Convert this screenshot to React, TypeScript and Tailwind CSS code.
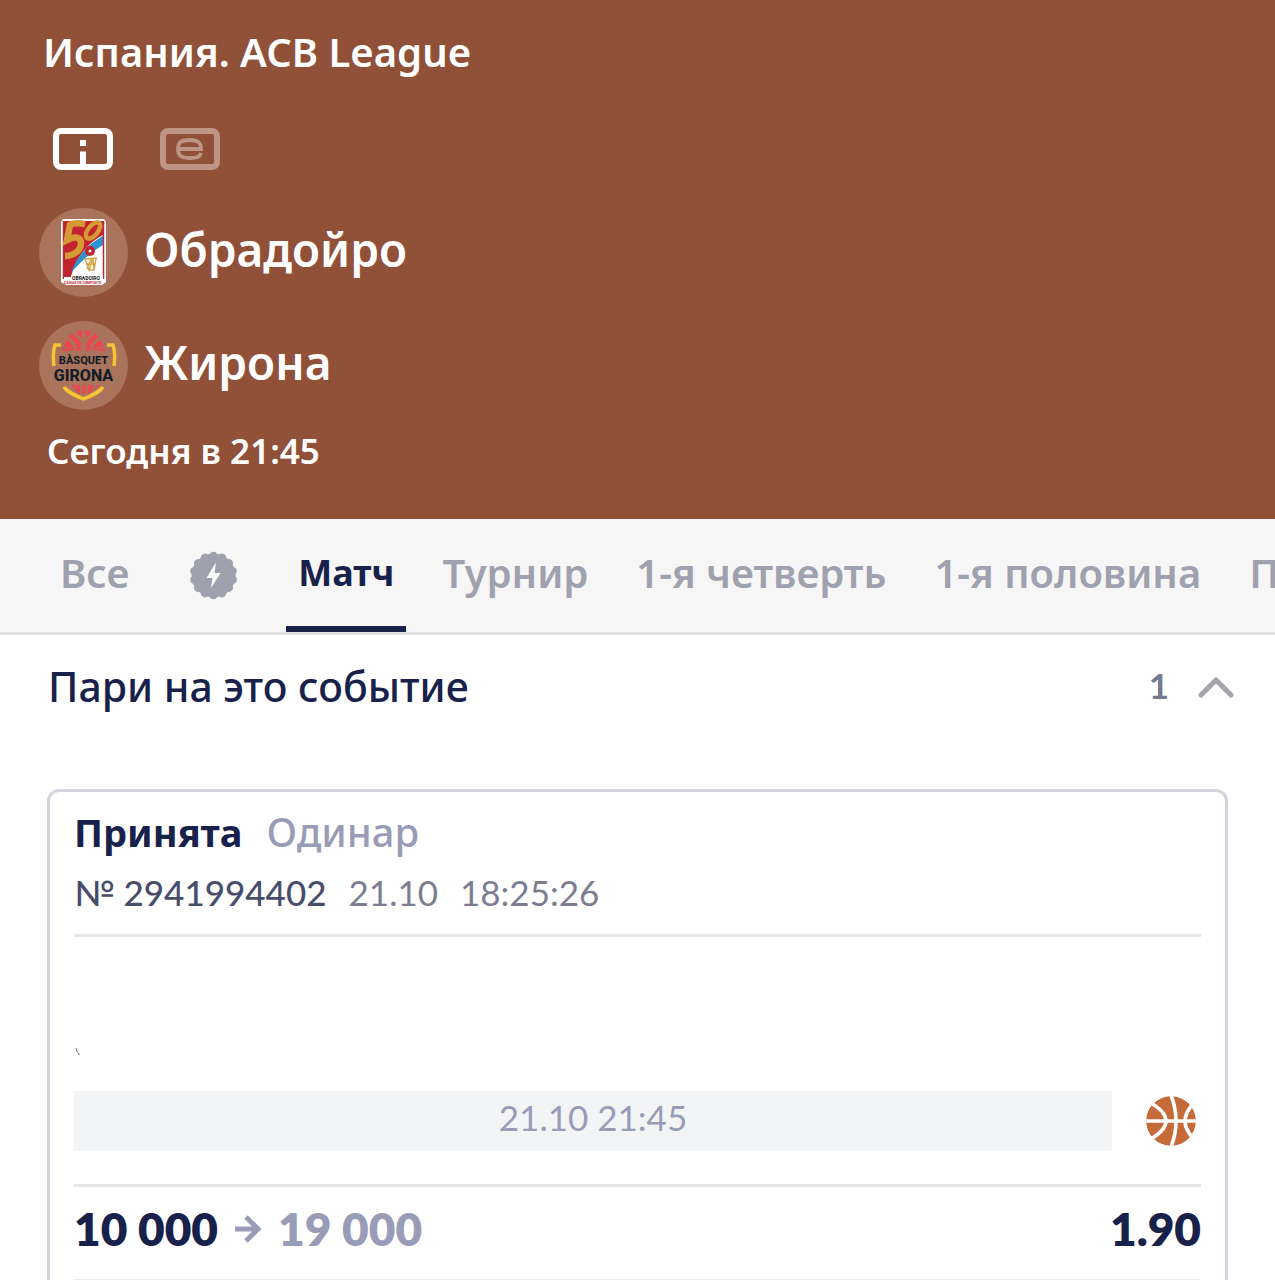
import type { ReactNode } from "react";

function InfoIcon() {
  return (
    <svg width="60" height="42" viewBox="0 0 60 42" aria-hidden="true">
      <rect x="3" y="3" width="54" height="36" rx="5" fill="none" stroke="#fff" strokeWidth="6" />
      <path d="M27 12h6v6h-6zM27 23.500h6V38h-6z" fill="#fff" />
    </svg>
  );
}

function EventIcon() {
  return (
    <svg width="60" height="42" viewBox="0 0 60 42" fill="none" stroke="#be9584" aria-hidden="true">
      <rect x="3" y="3" width="54" height="36" rx="5" strokeWidth="6" />
      <path d="M18 21H41C41 14.500 38 12 30 12C21 12 18 14.500 18 21C18 27.500 21 30 30 30C37 30 40 29 41 25" strokeWidth="3.800" />
    </svg>
  );
}

function ObradoiroLogo() {
  return (
    <svg width="89" height="89" viewBox="0 0 89 89" role="img" aria-label="Obradoiro">
      <circle cx="44.500" cy="44.500" r="44.500" fill="#a9735c" />
      <path d="M24 11h41l2 3v60l-4 3H27l-5-3V14z" fill="#fff" />
      <path d="M25 13h39v56H25z" fill="#c3232f" />
      <path d="M64 27C50 34 36 50 32 69h32z" fill="#fff" />
      <path d="M64 28C51 35 38 47 32 65C39 56 52 44 64 37z" fill="#2b94cf" />
      <path d="M24.500 13v58M64.500 13v58" stroke="#b92935" strokeWidth="1.500" />
      <path d="M46 16C40 15 34 15 31 17L28 32C36 28 42 29 42 35C42 43 34 48 26 48" fill="none" stroke="#d49a35" strokeWidth="6.500" />
      <path d="M54 16c6-4 9 0 6 6c-4 8-13 12-13 5c0-4 3-8 7-11z" fill="none" stroke="#d49a35" strokeWidth="4.500" />
      <circle cx="51" cy="43" r="5" fill="#c3232f" />
      <circle cx="51" cy="43" r="1.500" fill="#fff" />
      <path d="M45 51l13-1M46 51l4 11l4-12l1 12l2-11M47 56h9M52 51l-4 10M50 62h5" fill="none" stroke="#d5a544" strokeWidth="1.400" />
      <path d="M25 67h39v8H25z" fill="#fff" />
      <path d="M24 66h8v3h-8z" fill="#c3232f" />
      <g fontFamily="Roboto, sans-serif" fontWeight="700">
        <text x="33" y="72" fontSize="5" fill="#161616">OBRADOIRO</text>
        <text x="25" y="76" fontSize="3.500" fill="#b92935">CAIXAS DE COMPOSTE</text>
      </g>
    </svg>
  );
}

function GironaLogo() {
  return (
    <svg width="89" height="89" viewBox="0 0 89 89" role="img" aria-label="Bàsquet Girona">
      <circle cx="44.500" cy="44.500" r="44.500" fill="#a9735c" />
      <g fill="#e94950">
        <path d="M43 9v9l-7-7zM46 9v9l7-7zM33 12l9 9v9h-4c0-7-3-10-9-14zM56 12l-9 9v9h4c0-7 3-10 9-14zM27 18c5 3 8 7 9 12l-11-5zM62 18c-5 3-8 7-9 12l11-5zM24 26l9 4H23zM65 26l-9 4h10z" />
        <path d="M36 64h5v9l-4-3zM43 64h4v9h-4zM49 64h6l-2 6l-4 3zM32 64h3v4zM57 64h3l-3 4z" />
      </g>
      <path d="M22 24h-6c-2 6-2 14-1 21M68 24h6c2 6 2 14 1 21" fill="none" stroke="#f5c532" strokeWidth="3.500" />
      <path d="M25 66c3 5 10 8 19.500 12C54 74 61 71 64 66" fill="none" stroke="#f5c532" strokeWidth="3.500" />
      <g fontFamily="Roboto, sans-serif" fontWeight="800" fill="#131c29" textAnchor="middle">
        <text x="44.500" y="43" fontSize="11">BÀSQUET</text>
        <text x="44.500" y="60" fontSize="16">GIRONA</text>
      </g>
    </svg>
  );
}

function BoostIcon() {
  return (
    <svg width="49" height="49" viewBox="-24.500 -24.500 49 49" fill="#9fa1ae" aria-hidden="true">
      <circle r="22" />
      {Array.from({ length: 14 }, (_, i) => (
        <circle key={i} cy="-20" r="3.800" transform={`rotate(${(i * 360) / 14})`} />
      ))}
      <path d="M2.500-13L-7 2.500h6L-2.500 12.500L7-2.500H1z" fill="#fff" />
    </svg>
  );
}

function Basketball() {
  return (
    <svg width="52" height="52" viewBox="0 0 52 52" className="shrink-0" role="img" aria-label="Баскетбол">
      <clipPath id="ball">
        <circle cx="26" cy="26" r="25" />
      </clipPath>
      <g clipPath="url(#ball)">
        <circle cx="26" cy="26" r="25" fill="#c56b3a" />
        <g fill="none" stroke="#fff" strokeWidth="3.600">
          <path d="M0 26h52M26 0q10 26 0 52M6 8Q36 26 6 44M48 9Q32 26 48 43" />
        </g>
      </g>
    </svg>
  );
}

function Team({ logo, name }: { logo: ReactNode; name: string }) {
  return (
    <div className="flex items-center gap-4">
      {logo}
      <span className="pb-2 text-[46px] leading-[60px] font-semibold">{name}</span>
    </div>
  );
}

function Tab({ children, active = false }: { children: ReactNode; active?: boolean }) {
  return (
    <button
      role="tab"
      aria-selected={active}
      className={
        active
          ? "shrink-0 border-b-6 border-[#18214a] px-3 text-[36px] font-bold text-[#18214a]"
          : "shrink-0 border-b-6 border-transparent px-3 text-[40px] font-semibold text-[#9fa1ae]"
      }
    >
      {children}
    </button>
  );
}

export default function App() {
  return (
    <div className="h-screen overflow-hidden bg-white font-['Noto_Sans',sans-serif] text-[#18214a]">
      <header className="flex flex-col bg-[#915038] px-[39px] pt-6 pb-11 text-white">
        <h1 className="px-1 text-[40px] leading-[56px] font-semibold">Испания. ACB League</h1>
        <div className="mt-12 flex gap-[47px] px-[14px]">
          <button aria-label="Информация"><InfoIcon /></button>
          <button aria-label="События"><EventIcon /></button>
        </div>
        <div className="mt-[38px] flex flex-col gap-6">
          <Team logo={<ObradoiroLogo />} name="Обрадойро" />
          <Team logo={<GironaLogo />} name="Жирона" />
        </div>
        <p className="mt-[17px] px-2 text-[35px] leading-[48px] font-semibold">Сегодня в 21:45</p>
      </header>

      <div role="tablist" className="flex h-[116px] gap-6 overflow-hidden border-b-3 border-[#dfdfe4] bg-[#f6f6f6] pl-12 whitespace-nowrap">
        <Tab>Все</Tab>
        <button role="tab" aria-selected="false" aria-label="Усиленные ставки" className="shrink-0 px-6">
          <BoostIcon />
        </button>
        <Tab active>Матч</Tab>
        <Tab>Турнир</Tab>
        <Tab>1-я четверть</Tab>
        <Tab>1-я половина</Tab>
        <Tab>П</Tab>
      </div>

      <main>
        <button className="flex h-[104px] w-full items-center pr-10 pl-12 text-left">
          <span className="flex-1 text-[41px] font-medium">Пари на это событие</span>
          <span className="mr-7 pb-1 font-[Lato,sans-serif] text-[35px] font-bold text-[#757a92]">1</span>
          <svg width="38" height="24" viewBox="0 0 38 24" fill="none" stroke="#a3a3ae" strokeWidth="5" strokeLinecap="round" strokeLinejoin="round" aria-hidden="true">
            <path d="M4 20L19 5L34 20" />
          </svg>
        </button>

        <section className="mx-[47px] mt-[50px] rounded-xl border-3 border-[#d4d4de] px-6 pb-6">
          <div className="flex gap-6 pt-3 text-[40px] leading-[56px]">
            <h2 className="text-[38px] font-bold">Принята</h2>
            <span className="font-medium text-[#999cb7]">Одинар</span>
          </div>
          <div className="flex gap-[22px] pt-2 font-[Lato,sans-serif] text-[35px] leading-[48px] text-[#7c7d91]">
            <span className="font-medium text-[#484d6b]">№ 2941994402</span>
            <span>21.10</span>
            <span>18:25:26</span>
          </div>
          <hr className="mt-[18px] border-t-3 border-[#e6e6e9]" />
          <div className="h-[154px] pt-[110px]">
            <svg width="8" height="10" viewBox="0 0 8 10" fill="none" stroke="#777" aria-hidden="true">
              <path d="M2 1Q2 4 5.500 8" />
            </svg>
          </div>
          <div className="flex items-center gap-[33px] pr-1">
            <div className="flex-1 bg-[#f3f4f6] pb-2 text-center font-[Lato,sans-serif] text-[35px] leading-[52px] text-[#999cb7]">21.10 21:45</div>
            <Basketball />
          </div>
          <hr className="mt-[33px] border-t-3 border-[#e6e6e9]" />
          <div className="flex items-center pt-3 pb-5 font-[Lato,sans-serif] text-[46px] leading-[60px] font-extrabold">
            <span>10 000</span>
            <svg className="mx-4" width="28" height="28" viewBox="0 0 28 28" fill="none" stroke="#999cb7" strokeWidth="5" aria-hidden="true">
              <path d="M1 14H24M12 2L24 14L12 26" />
            </svg>
            <span className="flex-1 text-[#999cb7]">19 000</span>
            <span>1.90</span>
          </div>
          <hr className="border-t-3 border-[#ededf0]" />
        </section>
      </main>
    </div>
  );
}
